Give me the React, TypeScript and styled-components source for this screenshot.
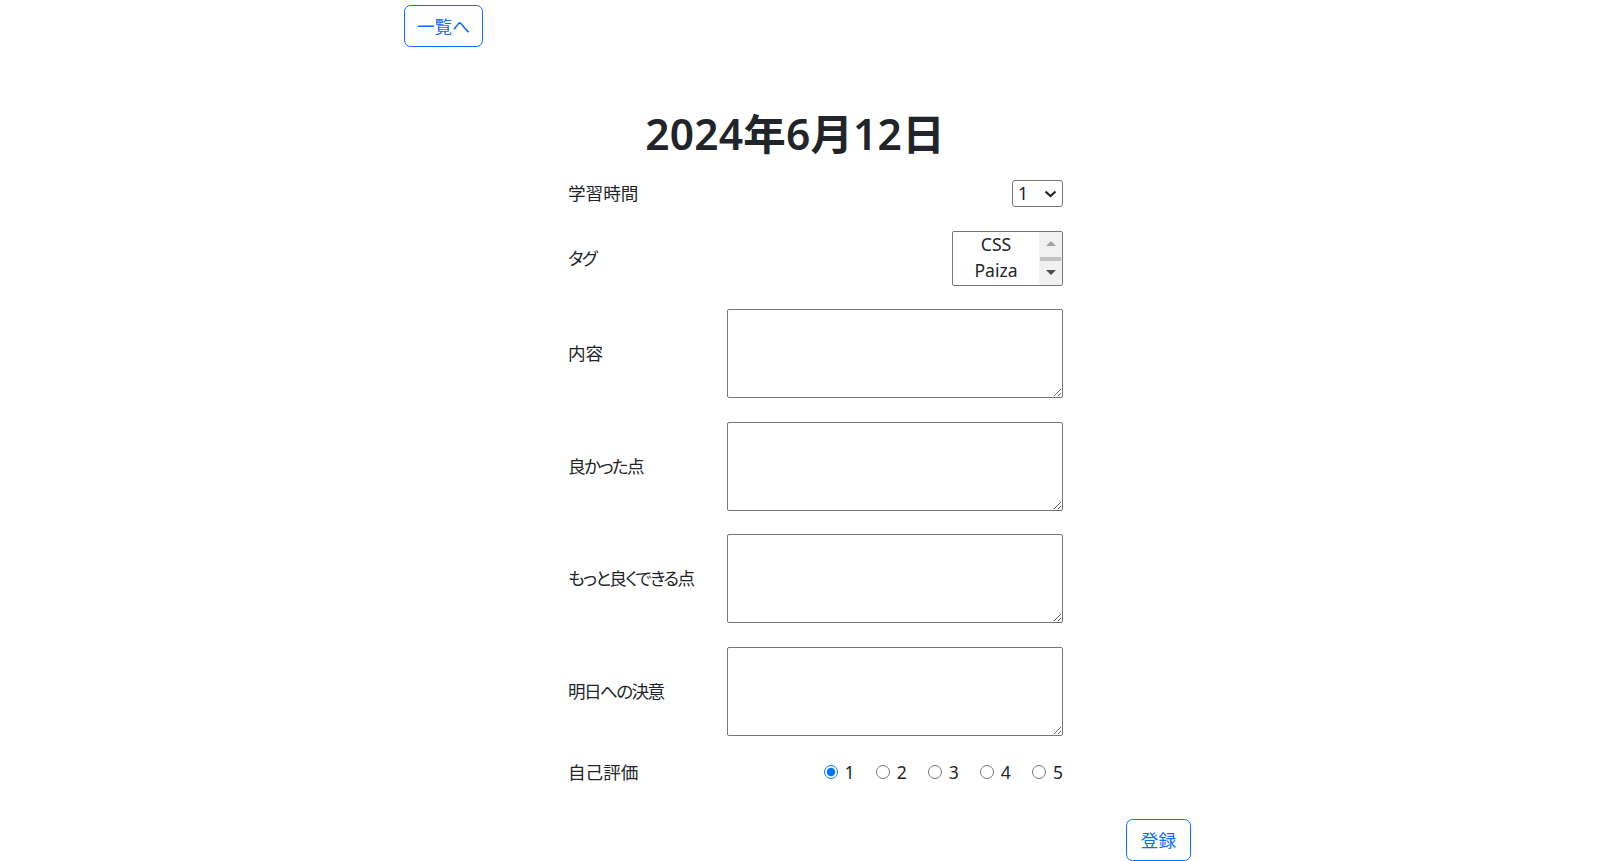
import React from "react";
import styled, { createGlobalStyle } from "styled-components";

const GlobalStyle = createGlobalStyle`
  *, *::before, *::after { box-sizing: border-box; }
  body {
    margin: 0;
    background: #fff;
    color: #212529;
    font-family: "Noto Sans", "Noto Sans CJK JP", sans-serif;
    font-size: 17.6px;
    line-height: 1.5;
    font-feature-settings: "palt";
  }
`;

const Page = styled.div`
  width: 809px;
  margin: 0 auto;
  padding-top: 5px;
`;

const TopBar = styled.div`
  display: flex;
`;

const Button = styled.button`
  font-family: inherit;
  font-size: 17.6px;
  line-height: 1.5;
  padding: 6.6px 14px;
  color: #0d6efd;
  background: transparent;
  border: 1px solid #0d6efd;
  border-radius: 6.6px;
  cursor: pointer;
  font-feature-settings: "palt";
`;

const BackButton = styled(Button)`
  padding: 6.6px 12px;
`;

const Title = styled.h1`
  margin: 61px 0 20.5px;
  padding-right: 27px;
  text-align: center;
  font-size: 42.5px;
  font-weight: 600;
  line-height: 52px;
  letter-spacing: 0.2px;
`;

const Form = styled.form`
  margin-left: 164px;
  width: 495px;
  display: grid;
  grid-template-columns: 1fr auto;
  row-gap: 23.5px;
  align-items: center;
`;

const Label = styled.label<{ $tight?: boolean }>`
  font-size: 17.6px;
  line-height: 1.5;
  letter-spacing: ${(p) => (p.$tight ? "-1.6px" : "0")};
`;

const Field = styled.div`
  justify-self: end;
  display: flex;
`;

const SelectBox = styled.div`
  width: 51px;
  height: 27px;
  border: 1px solid #767676;
  border-radius: 3px;
  background: #fff;
  display: flex;
  align-items: center;
  justify-content: space-between;
  padding: 0 5px 0 5px;
  font-size: 17.6px;
  line-height: 1;
  color: #212529;
`;

const Chevron = styled.svg`
  display: block;
  width: 13px;
  height: 8px;
`;

const ListBox = styled.div`
  width: 111px;
  height: 55px;
  border: 1px solid #767676;
  border-radius: 2px;
  display: flex;
  overflow: hidden;
  background: #fff;
`;

const Options = styled.div`
  flex: 1;
  display: flex;
  flex-direction: column;
  text-align: center;
  line-height: 26px;
  margin-top: -1px;
`;

const Option = styled.div`
  font-size: 17.6px;
  color: #212529;
`;

const ScrollBar = styled.div`
  width: 23px;
  background: #f1f1f1;
  display: flex;
  flex-direction: column;
`;

const ScrollButton = styled.div<{ $down?: boolean; $disabled?: boolean }>`
  height: 24px;
  display: flex;
  align-items: center;
  justify-content: center;
  &::after {
    content: "";
    width: 0;
    height: 0;
    border-left: 5px solid transparent;
    border-right: 5px solid transparent;
    ${(p) =>
      p.$down
        ? `border-top: 5px solid ${p.$disabled ? "#a3a3a3" : "#505050"};`
        : `border-bottom: 5px solid ${p.$disabled ? "#a3a3a3" : "#505050"};`}
  }
`;

const Thumb = styled.div`
  height: 4px;
  margin: 1px 1px 0;
  background: #c1c1c1;
`;

const Track = styled.div`
  flex: 1;
`;

const TextArea = styled.textarea`
  width: 336px;
  height: 89px;
  border: 1px solid #767676;
  border-radius: 2px;
  font-family: inherit;
  font-size: 17.6px;
  resize: vertical;
  display: block;
`;

const RadioGroup = styled.div`
  justify-self: end;
  display: flex;
  gap: 21px;
`;

const RadioItem = styled.label`
  display: flex;
  align-items: center;
  gap: 7px;
  font-size: 17.6px;
  line-height: 1.5;
`;

const Radio = styled.input`
  margin: 0;
  width: 14px;
  height: 14px;
`;

const ButtonRow = styled.div`
  display: flex;
  justify-content: flex-end;
  padding-right: 22px;
  margin-top: 33.5px;
`;

const textFields: { label: string; tight: boolean }[] = [
  { label: "内容", tight: false },
  { label: "良かった点", tight: true },
  { label: "もっと良くできる点", tight: true },
  { label: "明日への決意", tight: true },
];

export default function App() {
  return (
    <>
      <GlobalStyle />
      <Page>
        <TopBar>
          <BackButton type="button">一覧へ</BackButton>
        </TopBar>
        <Title>2024年6月12日</Title>
        <Form onSubmit={(e) => e.preventDefault()}>
          <Label>学習時間</Label>
          <Field>
            <SelectBox role="combobox" aria-label="学習時間">
              <span>1</span>
              <Chevron viewBox="0 0 13 8" aria-hidden="true">
                <path d="M1.5 1.5 L6.5 6 L11.5 1.5" fill="none" stroke="#212529" strokeWidth="2.2" />
              </Chevron>
            </SelectBox>
          </Field>

          <Label $tight>タグ</Label>
          <Field>
            <ListBox role="listbox">
              <Options>
                <Option>CSS</Option>
                <Option>Paiza</Option>
              </Options>
              <ScrollBar>
                <ScrollButton $disabled />
                <Thumb />
                <Track />
                <ScrollButton $down />
              </ScrollBar>
            </ListBox>
          </Field>

          {textFields.map((t) => (
            <React.Fragment key={t.label}>
              <Label $tight={t.tight}>{t.label}</Label>
              <Field>
                <TextArea />
              </Field>
            </React.Fragment>
          ))}

          <Label>自己評価</Label>
          <RadioGroup>
            {[1, 2, 3, 4, 5].map((n) => (
              <RadioItem key={n}>
                <Radio type="radio" name="score" defaultChecked={n === 1} />
                {n}
              </RadioItem>
            ))}
          </RadioGroup>
        </Form>
        <ButtonRow>
          <Button type="submit">登録</Button>
        </ButtonRow>
      </Page>
    </>
  );
}
